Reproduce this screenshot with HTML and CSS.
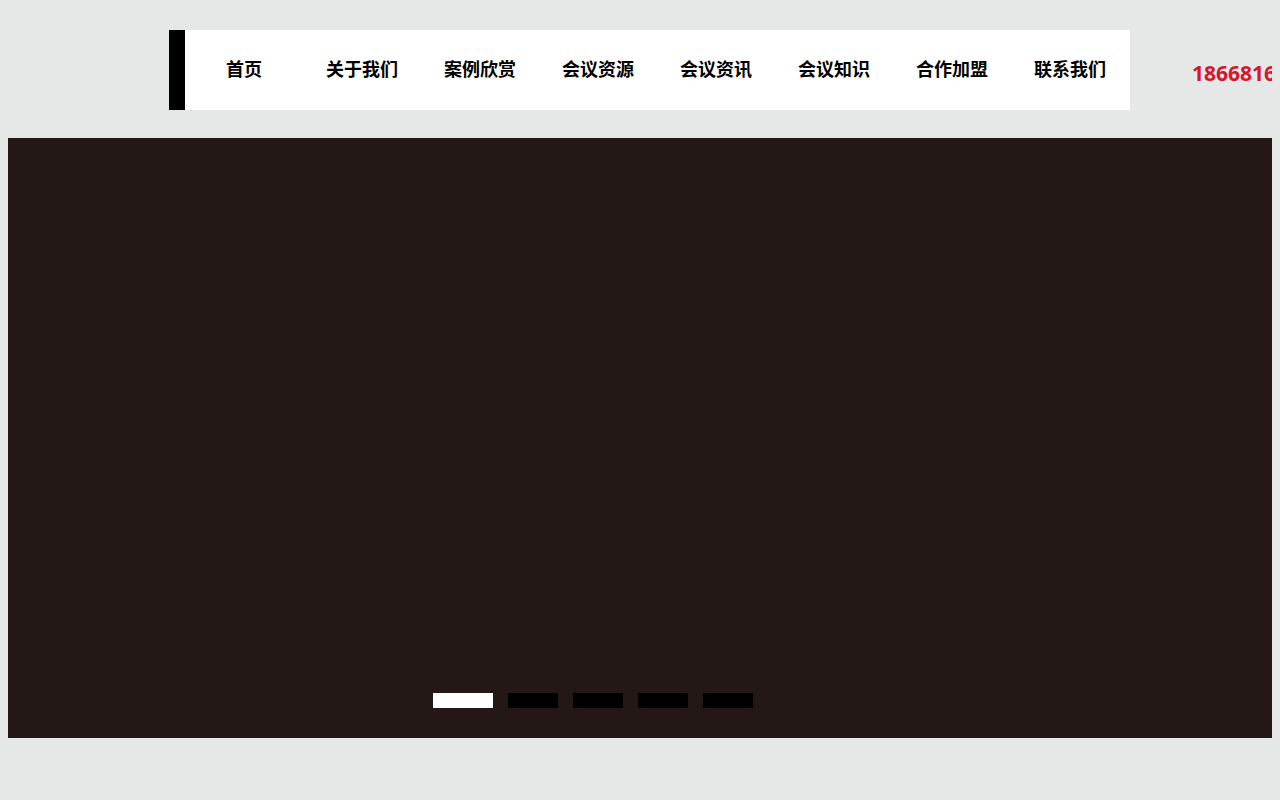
FILE: index.html
```html
<!DOCTYPE html>
<html lang="zh">
<head>
<meta charset="utf-8">
<title>会议</title>
<link rel="stylesheet" href="styles.css">
</head>
<body>
<div class="header">
  <div class="nav">
    <div class="nav-mark"></div>
    <a class="nav-item" href="#">首页</a>
    <a class="nav-item" href="#">关于我们</a>
    <a class="nav-item" href="#">案例欣赏</a>
    <a class="nav-item" href="#">会议资源</a>
    <a class="nav-item" href="#">会议资讯</a>
    <a class="nav-item" href="#">会议知识</a>
    <a class="nav-item" href="#">合作加盟</a>
    <a class="nav-item" href="#">联系我们</a>
  </div>
  <div class="phone">1866816</div>
</div>
<div class="banner">
  <div class="dots">
    <span class="dot active"></span>
    <span class="dot"></span>
    <span class="dot"></span>
    <span class="dot"></span>
    <span class="dot"></span>
  </div>
</div>
</body>
</html>
```
FILE: styles.css
```css
html, body {
  overflow: hidden;
}
body {
  margin: 8px;
  background: #e6e8e7;
  font-family: "Noto Sans CJK SC", "Noto Sans", sans-serif;
}
.header {
  display: flex;
  align-items: center;
  padding-top: 22px;
  padding-left: 161px;
  height: 80px;
}
.nav {
  display: flex;
  height: 80px;
  padding-right: 1px;
  background: #fff;
  flex: none;
}
.nav-mark {
  width: 16px;
  background: #000;
}
.nav-item {
  width: 118px;
  display: flex;
  align-items: center;
  justify-content: center;
  padding-bottom: 4px;
  box-sizing: border-box;
  color: #000;
  text-decoration: none;
  font-size: 18px;
  font-weight: bold;
}
.phone {
  margin-left: 62px;
  color: #d4172b;
  font-family: "Open Sans", sans-serif;
  font-weight: bold;
  font-size: 21px;
  white-space: nowrap;
  padding-top: 6px;
}
.banner {
  position: relative;
  margin-top: 28px;
  height: 600px;
  background: #231816;
}
.dots {
  position: absolute;
  left: 425px;
  bottom: 30px;
  display: flex;
  gap: 15px;
}
.dot {
  width: 50px;
  height: 15px;
  background: #000;
}
.dot.active {
  width: 60px;
  background: #fff;
}
```
